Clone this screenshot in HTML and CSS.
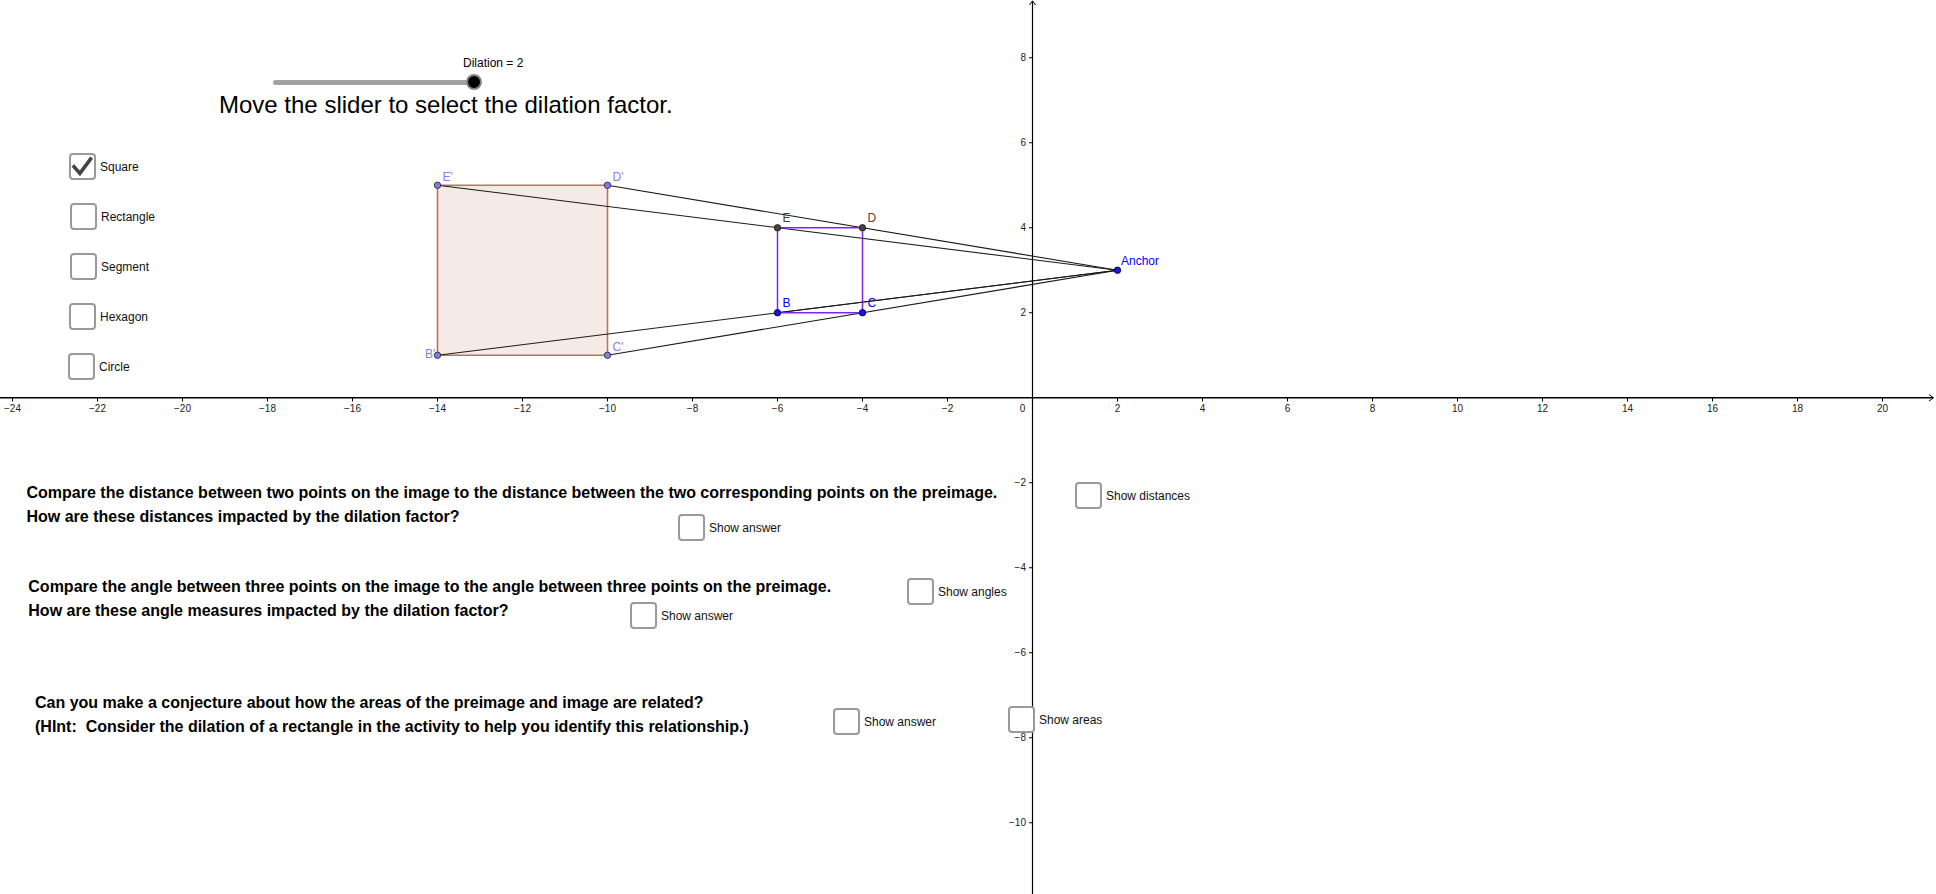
FILE: index.html
```html
<!DOCTYPE html>
<html lang="en">
<head>
<meta charset="utf-8">
<title>Dilation</title>
<link rel="stylesheet" href="styles.css">
</head>
<body>
<div class="applet">
  <svg class="graph" width="1936" height="894" viewBox="0 0 1936 894" xmlns="http://www.w3.org/2000/svg">
    <!-- axes -->
    <g class="axes">
      <line class="axis-x" x1="0" y1="397.75" x2="1933" y2="397.75"/>
      <polyline class="arrow" points="1929,394.5 1933.5,397.75 1929,401"/>
      <line class="axis-y" x1="1032.5" y1="1" x2="1032.5" y2="894"/>
      <polyline class="arrow" points="1029.5,5 1032.5,0.8 1035.5,5"/>
    </g>
    <g class="ticks">
      <path d="M12.5 398v3.5M97.5 398v3.5M182.5 398v3.5M267.5 398v3.5M352.5 398v3.5M437.5 398v3.5M522.5 398v3.5M607.5 398v3.5M692.5 398v3.5M777.5 398v3.5M862.5 398v3.5M947.5 398v3.5M1117.5 398v3.5M1202.5 398v3.5M1287.5 398v3.5M1372.5 398v3.5M1457.5 398v3.5M1542.5 398v3.5M1627.5 398v3.5M1712.5 398v3.5M1797.5 398v3.5M1882.5 398v3.5"/>
      <path d="M1029 57.75h3.5M1029 142.75h3.5M1029 227.75h3.5M1029 312.75h3.5M1029 482.75h3.5M1029 567.75h3.5M1029 652.75h3.5M1029 737.75h3.5M1029 822.75h3.5"/>
    </g>
    <g class="tick-x">
      <text x="12.5" y="412">−24</text>
      <text x="97.5" y="412">−22</text>
      <text x="182.5" y="412">−20</text>
      <text x="267.5" y="412">−18</text>
      <text x="352.5" y="412">−16</text>
      <text x="437.5" y="412">−14</text>
      <text x="522.5" y="412">−12</text>
      <text x="607.5" y="412">−10</text>
      <text x="692.5" y="412">−8</text>
      <text x="777.5" y="412">−6</text>
      <text x="862.5" y="412">−4</text>
      <text x="947.5" y="412">−2</text>
      <text x="1022.5" y="412">0</text>
      <text x="1117.5" y="412">2</text>
      <text x="1202.5" y="412">4</text>
      <text x="1287.5" y="412">6</text>
      <text x="1372.5" y="412">8</text>
      <text x="1457.5" y="412">10</text>
      <text x="1542.5" y="412">12</text>
      <text x="1627.5" y="412">14</text>
      <text x="1712.5" y="412">16</text>
      <text x="1797.5" y="412">18</text>
      <text x="1882.5" y="412">20</text>
    </g>
    <g class="tick-y">
      <text x="1026" y="61.25">8</text>
      <text x="1026" y="146.25">6</text>
      <text x="1026" y="231.25">4</text>
      <text x="1026" y="316.25">2</text>
      <text x="1026" y="486.25">−2</text>
      <text x="1026" y="571.25">−4</text>
      <text x="1026" y="656.25">−6</text>
      <text x="1026" y="741.25">−8</text>
      <text x="1026" y="826.25">−10</text>
    </g>

    <!-- image (dilated) rectangle -->
    <polygon class="image-poly" points="437.5,185.25 607.5,185.25 607.5,355.25 437.5,355.25"/>

    <!-- rays from image points to the anchor -->
    <g class="rays">
      <line x1="437.5" y1="185.25" x2="1117.5" y2="270.25"/>
      <line x1="607.5" y1="185.25" x2="1117.5" y2="270.25"/>
      <line x1="437.5" y1="355.25" x2="1117.5" y2="270.25"/>
      <line x1="607.5" y1="355.25" x2="1117.5" y2="270.25"/>
      <line x1="777.5" y1="312.75" x2="1117.5" y2="270.25"/>
    </g>

    <!-- preimage square -->
    <polygon class="pre-poly" points="777.5,227.75 862.5,227.75 862.5,312.75 777.5,312.75"/>

    <!-- points -->
    <g class="pt-image">
      <circle cx="437.5" cy="185.25" r="3.2"/>
      <circle cx="607.5" cy="185.25" r="3.2"/>
      <circle cx="607.5" cy="355.25" r="3.2"/>
      <circle cx="437.5" cy="355.25" r="3.2"/>
    </g>
    <g class="pt-dark">
      <circle cx="777.5" cy="227.75" r="3.2"/>
      <circle cx="862.5" cy="227.75" r="3.2"/>
    </g>
    <g class="pt-blue">
      <circle cx="777.5" cy="312.75" r="3.2"/>
      <circle cx="862.5" cy="312.75" r="3.2"/>
      <circle cx="1117.5" cy="270.25" r="3.2"/>
    </g>

    <!-- labels -->
    <g class="lbl lbl-image">
      <text x="442.5" y="181">E'</text>
      <text x="612.5" y="181">D'</text>
      <text x="612.5" y="351">C'</text>
      <text x="425" y="358">B'</text>
    </g>
    <g class="lbl lbl-dark">
      <text x="782.5" y="222">E</text>
      <text x="867.5" y="222">D</text>
    </g>
    <g class="lbl lbl-blue">
      <text x="782.5" y="307">B</text>
      <text x="867.5" y="307">C</text>
      <text x="1121" y="265">Anchor</text>
    </g>
  </svg>

  <div class="slider">
    <span class="slider-caption">Dilation = 2</span>
    <div class="slider-track"></div>
    <div class="slider-knob"></div>
  </div>

  <p class="instruction">Move the slider to select the dilation factor.</p>

  <div class="shape-list">
    <label class="cb">
      <span class="box checked">
        <svg class="check" width="23" height="23" viewBox="0 0 23 23"><polyline points="1.8,10.4 8.9,18.4 20.6,2.6"/></svg>
      </span>
      <span class="cb-text">Square</span>
    </label>
    <label class="cb shift1"><span class="box"></span><span class="cb-text">Rectangle</span></label>
    <label class="cb shift1"><span class="box"></span><span class="cb-text">Segment</span></label>
    <label class="cb"><span class="box"></span><span class="cb-text">Hexagon</span></label>
    <label class="cb shiftm1"><span class="box"></span><span class="cb-text">Circle</span></label>
  </div>

  <div class="question q1">
    <span class="q-line">Compare the distance between two points on the image to the distance between the two corresponding points on the preimage.</span>
    <span class="q-line">How are these distances impacted by the dilation factor?</span>
  </div>
  <label class="cb float ans1"><span class="box"></span><span class="cb-text">Show answer</span></label>
  <label class="cb float dist"><span class="box"></span><span class="cb-text">Show distances</span></label>

  <div class="question q2">
    <span class="q-line">Compare the angle between three points on the image to the angle between three points on the preimage.</span>
    <span class="q-line">How are these angle measures impacted by the dilation factor?</span>
  </div>
  <label class="cb float angles"><span class="box"></span><span class="cb-text">Show angles</span></label>
  <label class="cb float ans2"><span class="box"></span><span class="cb-text">Show answer</span></label>

  <div class="question q3">
    <span class="q-line">Can you make a conjecture about how the areas of the preimage and image are related?</span>
    <span class="q-line">(HInt:  Consider the dilation of a rectangle in the activity to help you identify this relationship.)</span>
  </div>
  <label class="cb float ans3"><span class="box"></span><span class="cb-text">Show answer</span></label>
  <label class="cb float areas"><span class="box"></span><span class="cb-text">Show areas</span></label>
</div>
</body>
</html>
```

FILE: styles.css
```css
html, body {
  margin: 0;
  padding: 0;
  background: #ffffff;
}

body {
  font-family: "Liberation Sans", Arial, Helvetica, sans-serif;
  color: #000000;
}

.applet {
  position: relative;
  width: 1936px;
  height: 894px;
  overflow: hidden;
  background: #ffffff;
}

/* ---------- graphics view ---------- */
.graph {
  position: absolute;
  left: 0;
  top: 0;
  display: block;
}

.graph text {
  font-family: "Liberation Sans", Arial, Helvetica, sans-serif;
}

.axis-x {
  stroke: #000;
  stroke-width: 1.4;
}

.axis-y {
  stroke: #000;
  stroke-width: 1.2;
}

.arrow {
  fill: none;
  stroke: #000;
  stroke-width: 1;
}

.ticks path {
  stroke: #000;
  stroke-width: 1;
  fill: none;
}

.tick-x text {
  font-size: 10px;
  fill: #222;
  text-anchor: middle;
}

.tick-y text {
  font-size: 10px;
  fill: #222;
  text-anchor: end;
}

.image-poly {
  fill: rgba(153, 51, 0, 0.1);
  stroke: #c27450;
  stroke-width: 1.6;
}

.rays line {
  stroke: #1a1a1a;
  stroke-width: 1.1;
}

.pre-poly {
  fill: none;
  stroke: #7a26ec;
  stroke-width: 1.5;
}

.pt-image circle {
  fill: #8678ef;
  stroke: #2e2e2e;
  stroke-width: 0.9;
}

.pt-dark circle {
  fill: #444444;
  stroke: #1e1e1e;
  stroke-width: 0.9;
}

.pt-blue circle {
  fill: #1616e8;
  stroke: #000044;
  stroke-width: 0.9;
}

.lbl text {
  font-size: 12px;
}

.lbl-image text {
  fill: #8a7cf2;
}

.lbl-dark text {
  fill: #444444;
}

.lbl-blue text {
  fill: #0000ff;
}

/* ---------- slider ---------- */
.slider {
  position: absolute;
  left: 273px;
  top: 56px;
  width: 212px;
  height: 36px;
}

.slider-caption {
  position: absolute;
  left: 190px;
  top: 0;
  font-size: 12px;
  line-height: 14px;
  white-space: nowrap;
}

.slider-track {
  position: absolute;
  left: 0;
  top: 24px;
  width: 202px;
  height: 4.5px;
  border-radius: 3px;
  background: #a2a2a2;
}

.slider-knob {
  position: absolute;
  left: 193.3px;
  top: 18.3px;
  width: 16px;
  height: 16px;
  box-sizing: border-box;
  border-radius: 50%;
  background: #000;
  border: 2.6px solid #858585;
}

.instruction {
  position: absolute;
  left: 219px;
  top: 90.5px;
  margin: 0;
  font-size: 24px;
  line-height: 28px;
  white-space: nowrap;
}

/* ---------- checkboxes ---------- */
.shape-list {
  position: absolute;
  left: 69px;
  top: 153px;
  display: flex;
  flex-direction: column;
  gap: 23px;
}

.cb {
  display: flex;
  align-items: center;
  gap: 4px;
  font-size: 12px;
  line-height: 14px;
  color: #111;
  white-space: nowrap;
}

.shift1 {
  margin-left: 1px;
}

.shiftm1 {
  margin-left: -1px;
}

.box {
  width: 27px;
  height: 27px;
  box-sizing: border-box;
  border: 2px solid #9a9a9a;
  border-radius: 4px;
  background: #fff;
  display: block;
}

.check {
  display: block;
}

.check polyline {
  fill: none;
  stroke: #444;
  stroke-width: 3.6;
  stroke-linejoin: miter;
}

.float {
  position: absolute;
}

.ans1 { left: 678px; top: 514px; }
.dist { left: 1075px; top: 482px; }
.angles { left: 907px; top: 578px; }
.ans2 { left: 630px; top: 602px; }
.ans3 { left: 833px; top: 708px; }
.areas { left: 1008px; top: 706px; }

/* ---------- question texts ---------- */
.question {
  position: absolute;
  display: flex;
  flex-direction: column;
  align-items: flex-start;
  font-size: 16px;
  font-weight: bold;
  white-space: pre;
}

.q-line {
  display: block;
}

.q1 {
  left: 26.5px;
  top: 480.5px;
  line-height: 24px;
}

.q2 {
  left: 28.3px;
  top: 575px;
  line-height: 23.5px;
}

.q3 {
  left: 35px;
  top: 691px;
  line-height: 23.5px;
}
```
